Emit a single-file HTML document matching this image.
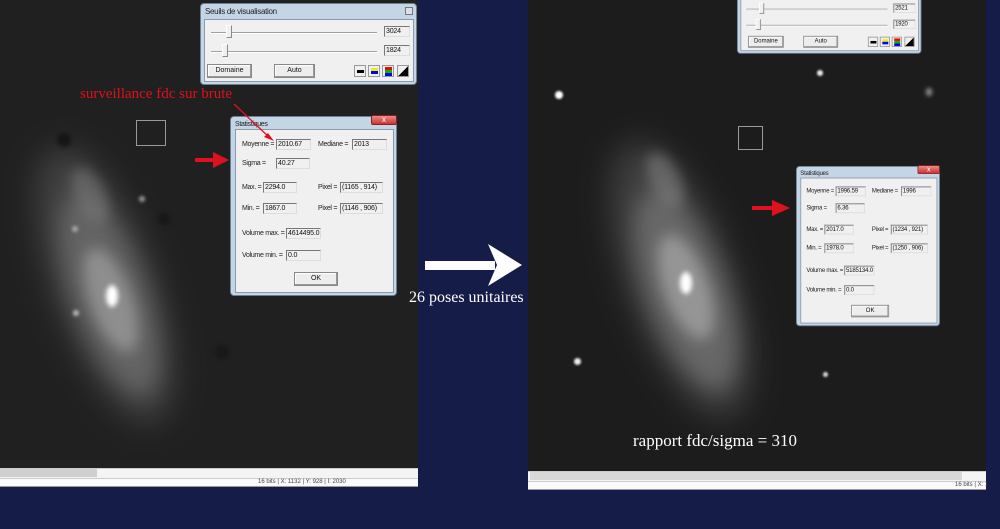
<!DOCTYPE html>
<html><head><meta charset="utf-8"><style>
*{margin:0;padding:0;box-sizing:border-box}
body{width:1000px;height:529px;background:#151c47;position:relative;overflow:hidden;font-family:"Liberation Sans",sans-serif}
.a{position:absolute}
.img{background:#1d1d1d;overflow:hidden}
.blur{position:absolute;border-radius:50%;filter:blur(6px)}
.dlg{position:absolute;background:#c4d5e6;border:1px solid #6d7f92;border-radius:4px;transform-origin:0 0}
.in{position:absolute;background:#f0f0f0;border:1px solid #8a9aaa}
.t{position:absolute;font-size:7px;letter-spacing:-0.3px;color:#222;white-space:nowrap;line-height:10px}
.bx{position:absolute;height:11px;border:1px solid #777;border-right-color:#ddd;border-bottom-color:#ddd;background:#f0f0f0;font-size:7px;letter-spacing:-0.2px;line-height:9px;padding-left:1px;color:#111;white-space:nowrap;overflow:hidden}
.btn{position:absolute;border:1px solid #888;background:#ededed;font-size:7px;text-align:center;color:#111;box-shadow:inset -1px -1px #999,inset 1px 1px #fff}
.trk{position:absolute;height:2px;background:#a0a0a0;border-bottom:1px solid #fff}
.th{position:absolute;width:6px;height:13px;background:#f0f0f0;border:1px solid #888;border-top-color:#fff;border-left-color:#fff}
.ic{position:absolute;width:12px;height:12px;border:1px solid #999;background:#f0f0f0}
.serif{font-family:"Liberation Serif",serif}
</style></head><body>

<!-- LEFT IMAGE PANEL -->
<div class="a img" style="left:0;top:0;width:418px;height:468px;background:#202020">
  <div class="blur" style="left:55px;top:140px;width:100px;height:290px;background:rgba(100,100,100,.5);transform:rotate(-20deg);filter:blur(16px)"></div>
  <div class="blur" style="left:72px;top:190px;width:75px;height:210px;background:rgba(140,140,140,.45);transform:rotate(-20deg);filter:blur(11px)"></div>
  <div class="blur" style="left:90px;top:245px;width:42px;height:110px;background:rgba(185,185,185,.5);transform:rotate(-20deg);filter:blur(7px)"></div>
  <div class="blur" style="left:75px;top:165px;width:30px;height:60px;background:rgba(130,130,130,.5);transform:rotate(-25deg);filter:blur(6px)"></div>
  <div class="blur" style="left:106px;top:285px;width:12px;height:22px;background:#fff;filter:blur(2.5px)"></div>
  <div class="blur" style="left:72px;top:226px;width:6px;height:6px;background:#aaa;filter:blur(1.5px)"></div>
  <div class="blur" style="left:73px;top:310px;width:6px;height:6px;background:#bbb;filter:blur(1.5px)"></div>
  <div class="blur" style="left:139px;top:196px;width:6px;height:6px;background:#999;filter:blur(1.5px)"></div>
  <div class="blur" style="left:57px;top:133px;width:14px;height:14px;background:#151515;filter:blur(2px)"></div>
  <div class="blur" style="left:158px;top:213px;width:12px;height:12px;background:#181818;filter:blur(2px)"></div>
  <div class="blur" style="left:215px;top:345px;width:14px;height:14px;background:#181818;filter:blur(2px)"></div>
  <div class="a" style="left:136px;top:120px;width:30px;height:26px;border:1px solid #999"></div>
</div>
<div class="a" style="left:0;top:468px;width:418px;height:10px;background:#f4f4f4;border-top:1px solid #ccc"></div>
<div class="a" style="left:0;top:469px;width:97px;height:8px;background:#cfcfcf"></div>
<div class="a" style="left:0;top:478px;width:418px;height:9px;background:#fafafa;border-top:1px solid #ccc;border-bottom:1px solid #999"></div>
<div class="a" style="left:258px;top:479px;font-size:6px;color:#444;white-space:nowrap">16 bits | X: 1132 | Y: 928 | I: 2030</div>

<!-- RIGHT IMAGE PANEL -->
<div class="a img" style="left:528px;top:0;width:458px;height:471px;background:#1c1c1c">
  <div class="blur" style="left:100px;top:135px;width:105px;height:290px;background:rgba(100,100,100,.5);transform:rotate(-20deg);filter:blur(16px)"></div>
  <div class="blur" style="left:118px;top:185px;width:80px;height:210px;background:rgba(150,150,150,.45);transform:rotate(-20deg);filter:blur(11px)"></div>
  <div class="blur" style="left:136px;top:232px;width:44px;height:110px;background:rgba(195,195,195,.5);transform:rotate(-20deg);filter:blur(7px)"></div>
  <div class="blur" style="left:122px;top:150px;width:30px;height:60px;background:rgba(140,140,140,.5);transform:rotate(-25deg);filter:blur(6px)"></div>
  <div class="blur" style="left:152px;top:272px;width:12px;height:22px;background:#fff;filter:blur(2.5px)"></div>
  <div class="blur" style="left:27px;top:91px;width:8px;height:8px;background:#fff;filter:blur(1px)"></div>
  <div class="blur" style="left:289px;top:70px;width:6px;height:6px;background:#eee;filter:blur(1px)"></div>
  <div class="blur" style="left:46px;top:358px;width:7px;height:7px;background:#eee;filter:blur(1px)"></div>
  <div class="blur" style="left:398px;top:88px;width:6px;height:8px;background:#999;filter:blur(2px)"></div>
  <div class="blur" style="left:295px;top:372px;width:5px;height:5px;background:#ddd;filter:blur(1px)"></div>
  <div class="a" style="left:210px;top:126px;width:25px;height:24px;border:1px solid #999"></div>
</div>
<div class="a" style="left:528px;top:471px;width:458px;height:10px;background:#f4f4f4;border-top:1px solid #ccc"></div>
<div class="a" style="left:530px;top:472px;width:432px;height:8px;background:#d8d8d8"></div>
<div class="a" style="left:528px;top:481px;width:458px;height:9px;background:#fafafa;border-top:1px solid #ccc;border-bottom:1px solid #999"></div>
<div class="a" style="left:955px;top:482px;font-size:6px;color:#444;white-space:nowrap">16 bits | X: 1</div>

<!-- SEUILS left -->
<div class="dlg" style="left:200px;top:3px;width:217px;height:82px">
  <div class="t" style="left:4px;top:3px;font-size:8px">Seuils de visualisation</div>
  <div class="a" style="left:204px;top:3px;width:8px;height:8px;border:1px solid #777;background:#dde"></div>
  <div class="in" style="left:3px;top:15px;width:210px;height:63px">
    <div class="trk" style="left:6px;top:12px;width:166px"></div><div class="th" style="left:21px;top:5px"></div>
    <div class="bx" style="left:179px;top:6px;width:26px">3024</div>
    <div class="trk" style="left:6px;top:31px;width:166px"></div><div class="th" style="left:17px;top:24px"></div>
    <div class="bx" style="left:179px;top:25px;width:26px">1824</div>
    <div class="btn" style="left:2px;top:44px;width:45px;height:14px;line-height:12px">Domaine</div>
    <div class="btn" style="left:69px;top:44px;width:41px;height:14px;line-height:12px">Auto</div>
    <div class="ic" style="left:149px;top:45px"><div class="a" style="left:2px;top:4px;width:7px;height:3px;background:#000"></div></div>
    <div class="ic" style="left:163px;top:45px"><div class="a" style="left:2px;top:2px;width:7px;height:3px;background:#ee0"></div><div class="a" style="left:2px;top:5px;width:7px;height:3px;background:#00f"></div></div>
    <div class="ic" style="left:177px;top:45px"><div class="a" style="left:2px;top:1px;width:7px;height:3px;background:#f00"></div><div class="a" style="left:2px;top:4px;width:7px;height:3px;background:#0b0"></div><div class="a" style="left:2px;top:7px;width:7px;height:3px;background:#00f"></div></div>
    <div class="ic" style="left:192px;top:45px;background:linear-gradient(135deg,#f0f0f0 50%,#000 50%)"></div>
  </div>
</div>

<!-- SEUILS right -->
<div class="dlg" style="left:737px;top:-16px;width:217px;height:82px;transform:scale(.85)">
  <div class="in" style="left:3px;top:15px;width:210px;height:63px">
    <div class="trk" style="left:6px;top:12px;width:166px"></div><div class="th" style="left:21px;top:5px"></div>
    <div class="bx" style="left:179px;top:6px;width:26px">2521</div>
    <div class="trk" style="left:6px;top:31px;width:166px"></div><div class="th" style="left:17px;top:24px"></div>
    <div class="bx" style="left:179px;top:25px;width:26px">1920</div>
    <div class="btn" style="left:8px;top:44px;width:42px;height:14px;line-height:12px">Domaine</div>
    <div class="btn" style="left:73px;top:44px;width:41px;height:14px;line-height:12px">Auto</div>
    <div class="ic" style="left:149px;top:45px"><div class="a" style="left:2px;top:4px;width:7px;height:3px;background:#000"></div></div>
    <div class="ic" style="left:163px;top:45px"><div class="a" style="left:2px;top:2px;width:7px;height:3px;background:#ee0"></div><div class="a" style="left:2px;top:5px;width:7px;height:3px;background:#00f"></div></div>
    <div class="ic" style="left:177px;top:45px"><div class="a" style="left:2px;top:1px;width:7px;height:3px;background:#f00"></div><div class="a" style="left:2px;top:4px;width:7px;height:3px;background:#0b0"></div><div class="a" style="left:2px;top:7px;width:7px;height:3px;background:#00f"></div></div>
    <div class="ic" style="left:192px;top:45px;background:linear-gradient(135deg,#f0f0f0 50%,#000 50%)"></div>
  </div>
</div>

<!-- STATS left -->
<div class="dlg" style="left:230px;top:116px;width:167px;height:180px">
  <div class="t" style="left:4px;top:3px">Statistiques</div>
  <div class="a" style="left:140px;top:-2px;width:26px;height:10px;background:linear-gradient(#e88,#c33);border:1px solid #822;border-radius:2px;color:#fff;font-size:8px;text-align:center;line-height:8px">x</div>
  <div class="in" style="left:4px;top:12px;width:159px;height:164px">
    <div class="t" style="left:6px;top:10px">Moyenne =</div><div class="bx" style="left:40px;top:9px;width:35px">2010.67</div>
    <div class="t" style="left:82px;top:10px">Mediane =</div><div class="bx" style="left:116px;top:9px;width:35px">2013</div>
    <div class="t" style="left:6px;top:29px">Sigma =</div><div class="bx" style="left:40px;top:28px;width:34px">40.27</div>
    <div class="t" style="left:6px;top:53px">Max. =</div><div class="bx" style="left:27px;top:52px;width:34px">2294.0</div>
    <div class="t" style="left:82px;top:53px">Pixel =</div><div class="bx" style="left:104px;top:52px;width:43px">(1165 , 914)</div>
    <div class="t" style="left:6px;top:74px">Min. =</div><div class="bx" style="left:27px;top:73px;width:34px">1867.0</div>
    <div class="t" style="left:82px;top:74px">Pixel =</div><div class="bx" style="left:104px;top:73px;width:43px">(1146 , 906)</div>
    <div class="t" style="left:6px;top:99px">Volume max. =</div><div class="bx" style="left:50px;top:98px;width:35px">4614495.0</div>
    <div class="t" style="left:6px;top:121px">Volume min. =</div><div class="bx" style="left:50px;top:120px;width:35px">0.0</div>
    <div class="btn" style="left:58px;top:142px;width:44px;height:14px;line-height:12px">OK</div>
  </div>
</div>

<!-- STATS right -->
<div class="dlg" style="left:796px;top:166px;width:167px;height:180px;transform:scale(.862,.89)">
  <div class="t" style="left:4px;top:3px">Statistiques</div>
  <div class="a" style="left:140px;top:-2px;width:26px;height:10px;background:linear-gradient(#e88,#c33);border:1px solid #822;border-radius:2px;color:#fff;font-size:8px;text-align:center;line-height:8px">x</div>
  <div class="in" style="left:4px;top:12px;width:159px;height:164px">
    <div class="t" style="left:6px;top:10px">Moyenne =</div><div class="bx" style="left:40px;top:9px;width:35px">1996.59</div>
    <div class="t" style="left:82px;top:10px">Mediane =</div><div class="bx" style="left:116px;top:9px;width:35px">1996</div>
    <div class="t" style="left:6px;top:29px">Sigma =</div><div class="bx" style="left:40px;top:28px;width:34px">6.36</div>
    <div class="t" style="left:6px;top:53px">Max. =</div><div class="bx" style="left:27px;top:52px;width:34px">2017.0</div>
    <div class="t" style="left:82px;top:53px">Pixel =</div><div class="bx" style="left:104px;top:52px;width:43px">(1234 , 921)</div>
    <div class="t" style="left:6px;top:74px">Min. =</div><div class="bx" style="left:27px;top:73px;width:34px">1978.0</div>
    <div class="t" style="left:82px;top:74px">Pixel =</div><div class="bx" style="left:104px;top:73px;width:43px">(1250 , 906)</div>
    <div class="t" style="left:6px;top:99px">Volume max. =</div><div class="bx" style="left:50px;top:98px;width:35px">5185134.0</div>
    <div class="t" style="left:6px;top:121px">Volume min. =</div><div class="bx" style="left:50px;top:120px;width:35px">0.0</div>
    <div class="btn" style="left:58px;top:142px;width:44px;height:14px;line-height:12px">OK</div>
  </div>
</div>

<!-- annotations -->
<div class="a serif" style="left:80px;top:86px;color:#e0101a;font-size:15px;white-space:nowrap">surveillance fdc sur brute</div>
<svg class="a" style="left:0;top:0" width="1000" height="529">
  <line x1="234" y1="104" x2="270" y2="138" stroke="#e01020" stroke-width="1.3"/>
  <polygon points="274,141 264,137 268,133" fill="#e01020"/>
  <rect x="195" y="158" width="20" height="4" fill="#e01020"/>
  <polygon points="213,152 229,160 213,168" fill="#e01020"/>
  <rect x="752" y="206" width="22" height="4" fill="#e01020"/>
  <polygon points="772,200 790,208 772,216" fill="#e01020"/>
  <rect x="425" y="261" width="70" height="9" fill="#fff"/>
  <polygon points="488,244 522,265 488,286 497,265" fill="#fff"/>
</svg>
<div class="a serif" style="left:409px;top:289px;color:#fff;font-size:16px;white-space:nowrap">26 poses unitaires</div>
<div class="a serif" style="left:633px;top:431px;color:#fff;font-size:17px;white-space:nowrap">rapport fdc/sigma = 310</div>
</body></html>
